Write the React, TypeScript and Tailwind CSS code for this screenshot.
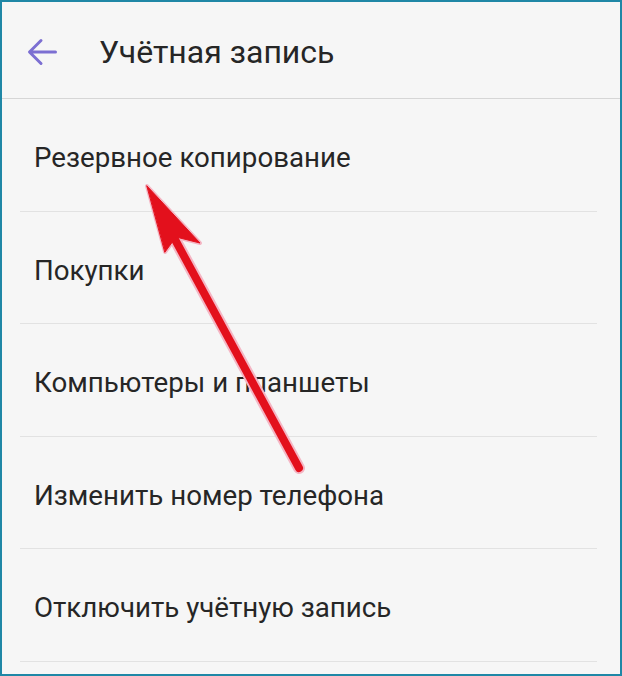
import React from "react";

const items = [
  "Резервное копирование",
  "Покупки",
  "Компьютеры и планшеты",
  "Изменить номер телефона",
  "Отключить учётную запись",
];

export default function App() {
  return (
    <div
      className="relative w-[622px] h-[676px] overflow-hidden border-2 border-[#1f87a6] bg-[#f6f6f6] text-[#222]"
      style={{ fontFamily: "Roboto, 'Noto Sans', sans-serif" }}
    >
      <div className="flex h-[97px] items-center border-b border-[#d6d6d6] pt-[4px]">
        <div className="ml-[24px] flex h-[32px] w-[32px] items-center justify-center">
          <svg width="30" height="28" viewBox="0 0 30 28" fill="none">
            <path
              d="M28.5 14H3M14 2.5L2.5 14l11.5 11.5"
              stroke="#7c6fd2"
              strokeWidth="3"
              strokeLinecap="round"
              strokeLinejoin="round"
            />
          </svg>
        </div>
        <div className="ml-[41px] text-[32px] leading-none text-[#262626]">Учётная запись</div>
      </div>
      <div className="ml-[18px] mr-[23px]">
        {items.map((t) => (
          <div
            key={t}
            className="flex h-[112.6px] items-center border-b border-[#e2e2e2] pl-[14px] pt-[6px] text-[27.7px] leading-none text-[#262626]"
          >
            {t}
          </div>
        ))}
      </div>
      <svg
        className="pointer-events-none absolute left-0 top-0"
        width="622"
        height="676"
        viewBox="0 0 622 676"
      >
        <g stroke="#f4b6c4" strokeWidth="4" strokeLinejoin="round" strokeLinecap="round" fill="#f4b6c4">
          <line x1="297" y1="466" x2="170" y2="232" strokeWidth="12" />
          <polygon points="145,184 198,241 174,235 163,250" />
        </g>
        <g stroke="#e3101c" strokeLinejoin="round" strokeLinecap="round" fill="#e3101c">
          <line x1="297" y1="466" x2="170" y2="232" strokeWidth="8" />
          <polygon points="145,184 198,241 174,235 163,250" strokeWidth="1" />
        </g>
      </svg>
    </div>
  );
}
